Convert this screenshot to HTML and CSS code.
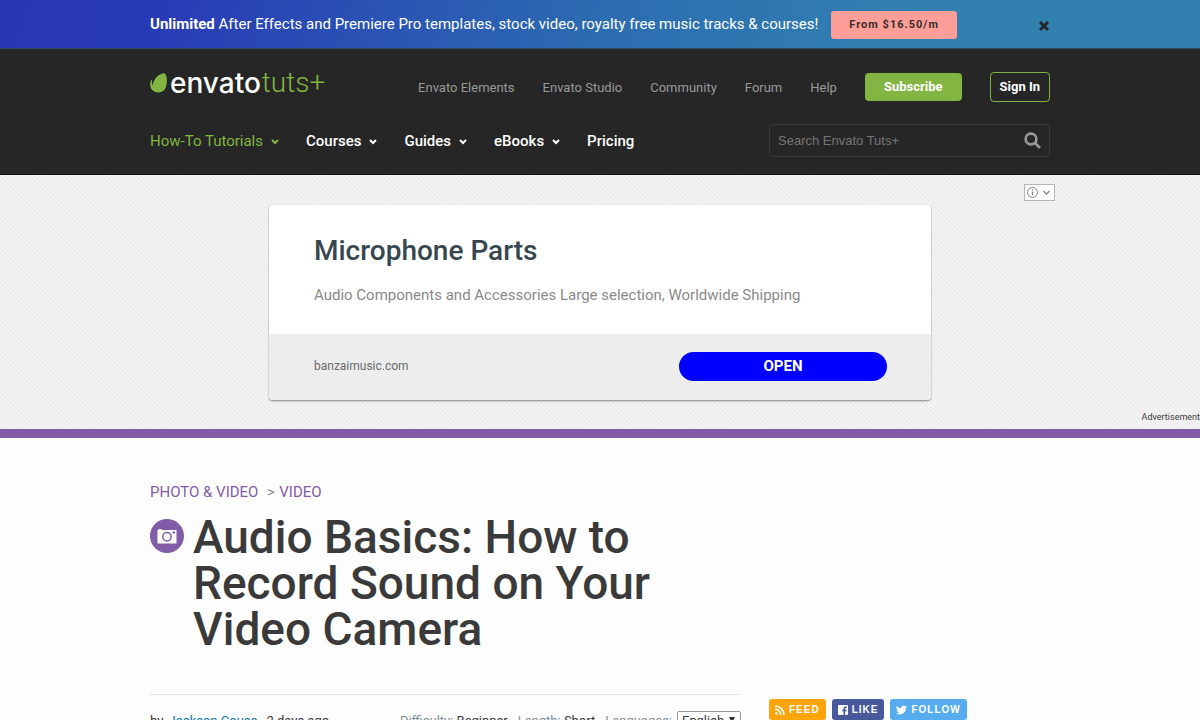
FILE: index.html
```
<!DOCTYPE html>
<html lang="en">
<head>
  <meta charset="UTF-8" />
  <meta name="viewport" content="width=device-width, initial-scale=1" />
  <title>Audio Basics: How to Record Sound on Your Video Camera</title>
  <link rel="stylesheet" href="styles.css">
</head>
<body>

  <div class="promo">
    <div class="container promo-inner">
      <p class="promo-text"><strong>Unlimited</strong> After Effects and Premiere Pro templates, stock video, royalty free music tracks &amp; courses!</p>
      <a class="promo-button" href="#">From $16.50/m</a>
      <button class="promo-close" type="button" aria-label="Close">
        <svg width="12" height="12" viewBox="0 0 12 12"><path d="M2 2l8 8M10 2l-8 8" stroke="#262626" stroke-width="3" /></svg>
      </button>
    </div>
  </div>

  <header class="header">
    <div class="container">
      <div class="header-top">
        <a class="logo" href="#">
          <svg width="18" height="20" viewBox="0 0 18 20">
            <path d="M14.8.5C16.6 2 17.4 6.200 16.700 11c-.8 5.200-3.800 8.400-8.200 8.500C4.200 19.600.7 17 .3 12.600.1 10 .6 8 1.500 7.100c.4-.3.7-.1.6.4-.3 2-.1 3.600.6 5C3.300 7 7 2 12.500.5c.9-.2 1.700-.3 2.300 0z" fill="#82b541" />
          </svg>
          <span class="logo-envato">envato</span><span class="logo-tuts">tuts+</span>
        </a>
        <nav class="site-links">
          <a href="#">Envato Elements</a>
          <a href="#">Envato Studio</a>
          <a href="#">Community</a>
          <a href="#">Forum</a>
          <a href="#">Help</a>
          <a class="subscribe" href="#">Subscribe</a>
          <a class="sign-in" href="#">Sign In</a>
        </nav>
      </div>
      <div class="header-bottom">
        <nav class="main-nav">
          <a class="active" href="#">How-To Tutorials <svg width="8" height="6" viewBox="0 0 8 6"><path d="M1 1l3 3 3-3" /></svg></a>
          <a href="#">Courses <svg width="8" height="6" viewBox="0 0 8 6"><path d="M1 1l3 3 3-3" /></svg></a>
          <a href="#">Guides <svg width="8" height="6" viewBox="0 0 8 6"><path d="M1 1l3 3 3-3" /></svg></a>
          <a href="#">eBooks <svg width="8" height="6" viewBox="0 0 8 6"><path d="M1 1l3 3 3-3" /></svg></a>
          <a href="#">Pricing</a>
        </nav>
        <form class="search">
          <input type="text" placeholder="Search Envato Tuts+" aria-label="Search Envato Tuts+" />
          <button type="submit" aria-label="Search">
            <svg width="17" height="17" viewBox="0 0 17 17" fill="none" stroke="#999" stroke-width="2.6"><circle cx="7" cy="7" r="5.4" /><path d="M11 11l5 5" /></svg>
          </button>
        </form>
      </div>
    </div>
  </header>

  <section class="ad">
    <button class="ad-info" type="button" aria-label="Ad options">
      <svg width="25" height="11" viewBox="0 0 25 11" fill="none" stroke="#808489">
        <circle cx="5.500" cy="5.500" r="5" /><path d="M5.500 4.500v4M5.500 2.200v1.300" stroke-width="1.3" /><path d="M16.500 4l3 3 3-3" stroke-width="1.3" />
      </svg>
    </button>
    <div class="ad-card">
      <div class="ad-main">
        <h2>Microphone Parts</h2>
        <p>Audio Components and Accessories Large selection, Worldwide Shipping</p>
      </div>
      <div class="ad-footer">
        <span>banzaimusic.com</span>
        <a href="#">OPEN</a>
      </div>
    </div>
    <span class="ad-label">Advertisement</span>
  </section>

  <div class="container page">
    <main class="content">
      <div class="breadcrumbs"><a href="#">PHOTO &amp; VIDEO</a> <span>&gt;</span> <a href="#">VIDEO</a></div>
      <div class="title">
        <svg class="title-icon" width="34" height="34" viewBox="0 0 34 34">
          <circle cx="17" cy="17" r="17" fill="#835ca8" />
          <path d="M7.500 11h1v-1h3v1h15v13.500h-19z" fill="#fff" />
          <circle cx="17" cy="17.700" r="4.200" fill="#fff" stroke="#835ca8" stroke-width="1.5" />
          <path d="M22.500 12.500h2.500v2h-2.500z" fill="#835ca8" />
        </svg>
        <h1>Audio Basics: How to Record Sound on Your Video Camera</h1>
      </div>
      <div class="meta">
        <div class="meta-author">by <a href="#">Jackson Couse</a><time>2 days ago</time></div>
        <div class="meta-info">
          <span>Difficulty: <b>Beginner</b></span>
          <span>Length: <b>Short</b></span>
          <label for="language">Languages:</label>
          <select id="language"><option>English</option></select>
        </div>
      </div>
    </main>

    <aside class="social">
      <a class="feed" href="#">
        <svg width="10" height="10" viewBox="0 0 10 10" fill="none" stroke="#fff" stroke-width="1.7"><circle cx="1.5" cy="8.5" r="1.3" fill="#fff" stroke="none" /><path d="M0 4.200a5.800 5.800 0 0 1 5.800 5.800M0 1a9 9 0 0 1 9 9" /></svg>
        FEED
      </a>
      <a class="like" href="#">
        <svg width="10" height="10" viewBox="0 0 10 10"><path fill="#fff" fill-rule="evenodd" d="M1 0h8a1 1 0 0 1 1 1v8a1 1 0 0 1-1 1H7.200V6.200h1.400l.2-1.500H7.200v-1c0-.5.2-.7.700-.7h.9V1.600H7.500c-1.300 0-2 .8-2 2v1.100H4.200v1.500h1.300V10H1a1 1 0 0 1-1-1V1a1 1 0 0 1 1-1z" /></svg>
        LIKE
      </a>
      <a class="follow" href="#">
        <svg width="11" height="10" viewBox="0 0 24 20"><path fill="#fff" d="M24 2.400a10 10 0 0 1-2.800.8A5 5 0 0 0 23.300.5a10 10 0 0 1-3.100 1.200 4.900 4.900 0 0 0-8.400 4.500A14 14 0 0 1 1.700 1a4.900 4.900 0 0 0 1.500 6.600A5 5 0 0 1 1 7a4.900 4.900 0 0 0 3.900 4.900 5 5 0 0 1-2.200.1 4.900 4.900 0 0 0 4.600 3.400A10 10 0 0 1 0 17.500 14 14 0 0 0 21.500 4.900 10 10 0 0 0 24 2.400z" /></svg>
        FOLLOW
      </a>
    </aside>
  </div>

</body>
</html>
```
FILE: styles.css
```
* {
  box-sizing: border-box;
}

html {
  scrollbar-width: none;
}

body {
  margin: 0;
  background: #fdfdfd;
  color: #3a3a3a;
  font-family: Roboto, Arial, sans-serif;
  font-size: 13px;
}

a {
  color: inherit;
  text-decoration: none;
}

button {
  padding: 0;
  border: none;
  background: none;
  cursor: pointer;
}

svg {
  display: block;
  flex: none;
}

.container {
  max-width: 900px;
  margin: 0 auto;
}

/* Promo bar */
.promo {
  background: linear-gradient(105deg, #2837b6 0%, #2839b6 12%, #2c6cb1 50%, #3180b0 75%, #3180b0 100%);
  border-bottom: 1px solid #2b4a66;
}

.promo-inner {
  display: flex;
  align-items: center;
  height: 48px;
}

.promo-text {
  margin: 0 13px 0 0;
  color: #fff;
  font-size: 15px;
  white-space: nowrap;
}

.promo-button {
  margin-top: 2px;
  padding: 0 18px;
  border-radius: 3px;
  background: #fd9f98;
  color: #3a2c2c;
  font-size: 11px;
  font-weight: bold;
  letter-spacing: 1px;
  line-height: 28px;
  white-space: nowrap;
}

.promo-close {
  margin: 4px 0 0 auto;
}

/* Header */
.header {
  padding: 22px 0 17px;
  background: #262626;
  border-bottom: 1px solid #111;
}

.header-top {
  display: flex;
  align-items: center;
  justify-content: space-between;
  height: 32px;
}

.logo {
  display: flex;
  align-items: center;
  height: 24px;
  margin-bottom: 8px;
  font-size: 28px;
  line-height: 24px;
}

.logo-envato {
  margin-left: 2px;
  color: #fff;
  font-family: Inter, sans-serif;
  font-weight: 500;
}

.logo-tuts {
  margin-left: 1px;
  color: #82b541;
  font-weight: 300;
}

.site-links {
  display: flex;
  align-items: center;
  gap: 28px;
  color: #999;
  font-size: 13px;
}

.subscribe,
.sign-in {
  border-radius: 4px;
  color: #fff;
  font-weight: bold;
  line-height: 28px;
}

.subscribe {
  padding: 0 19px;
  background: #82b541;
}

.sign-in {
  padding: 0 9px;
  border: 1px solid #82b541;
}

.header-bottom {
  display: flex;
  align-items: center;
  justify-content: space-between;
  margin-top: 21px;
}

.main-nav {
  display: flex;
  gap: 27px;
  color: #fff;
  font-size: 15px;
  font-weight: 500;
}

.main-nav a {
  display: flex;
  align-items: center;
  gap: 8px;
}

.main-nav .active {
  color: #82b541;
  font-weight: 400;
}

.main-nav svg {
  margin-top: 3px;
  fill: none;
  stroke: currentColor;
  stroke-width: 2;
}

.search {
  display: flex;
  align-items: center;
  width: 281px;
  height: 33px;
  padding: 0 8px;
  border: 1px solid #393939;
  border-radius: 4px;
}

.search input {
  flex: 1;
  min-width: 0;
  padding: 0;
  border: none;
  outline: none;
  background: none;
  color: #fff;
  font-family: "Liberation Sans", Arial, sans-serif;
  font-size: 13px;
}

.search input::placeholder {
  color: #757575;
}

/* Advertisement */
.ad {
  position: relative;
  padding: 30px 20px 29px;
  background: repeating-linear-gradient(45deg, #f4f4f4 0, #f4f4f4 1px, #e9e9e9 2px, #f4f4f4 3px);
  border-bottom: 9px solid #835ca8;
}

.ad-info {
  position: absolute;
  top: 9px;
  left: calc(50% + 424px);
  padding: 2px;
  border: 1px solid #b5b8bb;
  background: #fff;
}

.ad-card {
  max-width: 662px;
  margin: 0 auto;
  border-radius: 4px;
  background: #fff;
  box-shadow: 0 1px 2px rgba(0, 0, 0, 0.45);
  overflow: hidden;
}

.ad-main {
  padding: 29px 45px;
}

.ad-main h2 {
  margin: 0;
  color: #37474f;
  font-size: 28px;
  font-weight: 500;
  line-height: 34px;
}

.ad-main p {
  margin: 17px 0 0;
  color: #8a8a8a;
  font-size: 15px;
  line-height: 20px;
}

.ad-footer {
  display: flex;
  align-items: center;
  justify-content: space-between;
  height: 66px;
  padding: 0 44px 2px 45px;
  background: #ededed;
  color: #6b6b6b;
  font-size: 12px;
}

.ad-footer a {
  width: 208px;
  border-radius: 15px;
  background: #00f;
  color: #fff;
  font-size: 15px;
  font-weight: bold;
  line-height: 29px;
  text-align: center;
}

.ad-label {
  position: absolute;
  right: 0;
  bottom: 7px;
  font-size: 9px;
}

/* Article */
.page {
  display: flex;
  justify-content: space-between;
  padding-top: 44px;
}

.content {
  width: 591px;
}

.breadcrumbs {
  color: #835ca8;
  font-size: 15px;
  line-height: 20px;
}

.breadcrumbs span {
  margin: 0 1px 0 5px;
  color: #888;
  font-size: 14px;
}

.title {
  display: flex;
  align-items: flex-start;
  gap: 9px;
  max-width: 520px;
  margin-top: 12px;
}

.title-icon {
  margin-top: 5px;
}

h1 {
  margin: 0;
  font-size: 46px;
  font-weight: 500;
  line-height: 46px;
}

.meta {
  display: flex;
  align-items: center;
  justify-content: space-between;
  margin-top: 42px;
  padding-top: 16px;
  border-top: 1px solid #e3e3e3;
}

.meta-author a {
  margin: 0 9px 0 2px;
  color: #0e76a8;
}

.meta-info {
  display: flex;
  align-items: center;
  color: #849197;
}

.meta-info span {
  margin-right: 10px;
}

.meta-info b {
  color: #3a3a3a;
  font-weight: 400;
}

.meta-info select {
  width: 64px;
  height: 18px;
  margin-left: 5px;
  padding: 0 4px;
  border: 1px solid #999;
  border-radius: 2px;
  background: #fff url("data:image/svg+xml,%3Csvg xmlns='http://www.w3.org/2000/svg' width='6' height='6'%3E%3Cpath d='M0 0h6L3 6z' fill='%23333'/%3E%3C/svg%3E") no-repeat right 5px center;
  color: #3a3a3a;
  font-family: inherit;
  font-size: 13px;
  appearance: none;
}

.social {
  display: flex;
  align-items: flex-start;
  gap: 6px;
  width: 281px;
  margin-top: 217px;
}

.social a {
  display: flex;
  align-items: center;
  gap: 4px;
  padding: 0 6px;
  border-radius: 3px;
  color: #fff;
  font-family: "Liberation Sans", Arial, sans-serif;
  font-size: 10px;
  font-weight: bold;
  letter-spacing: 1px;
  line-height: 21px;
}

.feed {
  background: #fca40a;
}

.like {
  background: #47599b;
}

.follow {
  background: #55acee;
}
```
